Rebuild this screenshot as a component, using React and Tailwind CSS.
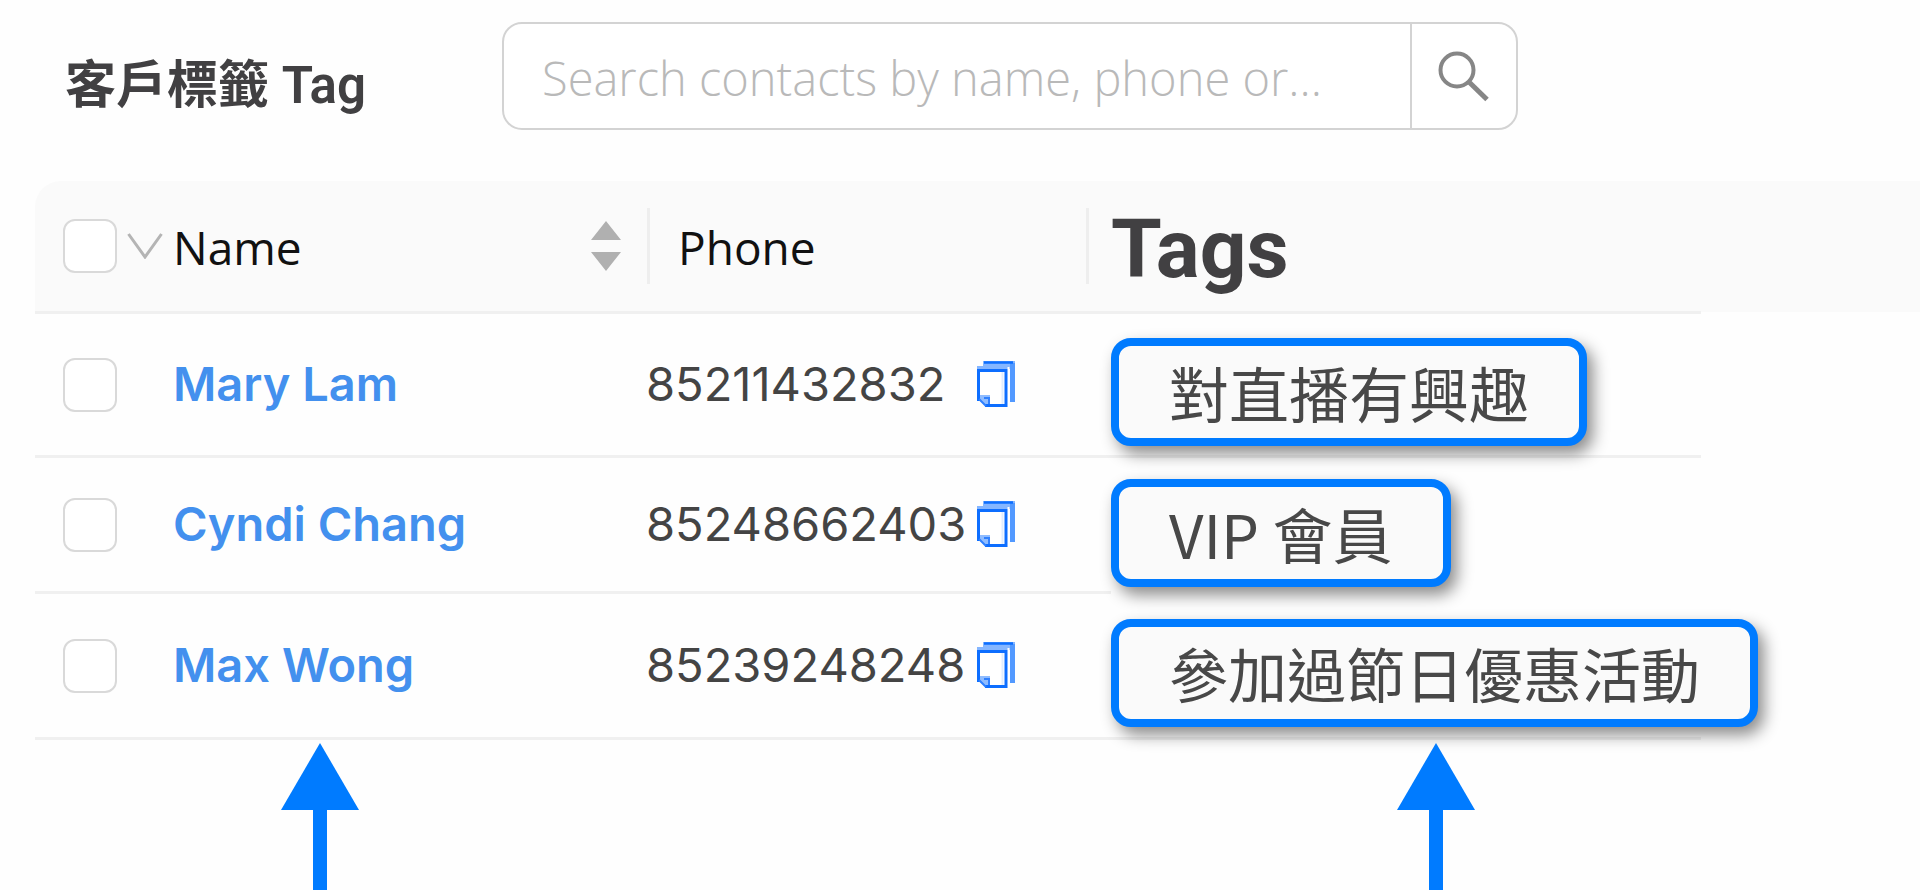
const contacts = [
  {
    id: "mary",
    name: "Mary Lam",
    phone: "85211432832",
    tag: "對直播有興趣",
    tagSize: "text-[60px]",
    height: "h-[144px]",
    tagLine: "border-b-3",
  },
  {
    id: "cyndi",
    name: "Cyndi Chang",
    phone: "85248662403",
    tag: "VIP 會員",
    tagSize: "text-[60px]",
    height: "h-[136px]",
    tagLine: "",
  },
  {
    id: "max",
    name: "Max Wong",
    phone: "85239248248",
    tag: "參加過節日優惠活動",
    tagSize: "text-[59px]",
    height: "h-[146px]",
    tagLine: "border-b-3",
  },
];

function Checkbox({ label }) {
  return (
    <input
      type="checkbox"
      aria-label={label}
      className="block size-[54px] shrink-0 appearance-none rounded-xl border-2 border-[#d9d9d9] bg-white checked:bg-[#007bff]"
    />
  );
}

function SearchIcon() {
  return (
    <svg viewBox="0 0 52 52" className="size-[52px]" fill="none" stroke="#868686" strokeWidth="4">
      <circle cx="19" cy="20" r="16.5" />
      <path d="M30.5 31.5 L49 49.5" strokeWidth="5" />
    </svg>
  );
}

function CopyIcon() {
  return (
    <svg viewBox="0 0 39 47" className="h-[47px] w-[39px]" fill="none">
      <rect x="6" y="0" width="32" height="8" fill="#85b6ff" />
      <rect x="0" y="5" width="30" height="4" fill="#85b6ff" />
      <rect x="33" y="2" width="5" height="39" fill="#5299ff" />
      <path d="M7 1.5 H36" stroke="#0d6eff" strokeWidth="2.5" />
      <path d="M1 8 H30 V46 H8 L1 40 Z" fill="#fff" />
      <path d="M31.5 6 V46" stroke="#fff" strokeWidth="2" />
      <path d="M25.5 11 V43" stroke="#e0edff" strokeWidth="2" />
      <path d="M2 34 H13 V44 H8 L2 39 Z" fill="#8fbcff" />
      <path d="M1.5 40 V9.5 H29 V44.5 H8" stroke="#0d6eff" strokeWidth="3" />
      <path d="M2 38 L9 45 M7 37 H12 V43" stroke="#2f80ff" strokeWidth="2" />
    </svg>
  );
}

function Arrow() {
  return (
    <div className="flex flex-col items-center">
      <svg viewBox="0 0 78 67" className="block h-[67px] w-[78px]">
        <path d="M39 0 L78 67 H0 Z" fill="#007bff" />
      </svg>
      <div className="w-3.5 flex-1 bg-[#007bff]" />
    </div>
  );
}

export default function App() {
  return (
    <div className="flex min-h-screen flex-col overflow-hidden bg-[#fefefe] font-['Inter','Noto_Sans_CJK_TC',sans-serif]">
      <header className="flex items-start pt-[22px] pb-[51px] pl-[65px]">
        <h1 className="w-[437px] pt-7 font-['Roboto','Noto_Sans_CJK_TC',sans-serif] text-[51px] leading-[72px] font-semibold whitespace-nowrap text-[#414042]">
          客戶標籤 Tag
        </h1>
        <form
          role="search"
          onSubmit={(e) => e.preventDefault()}
          className="flex h-[108px] w-full max-w-[1016px] overflow-hidden rounded-[20px] border-2 border-[#d3d3d3] bg-white"
        >
          <input
            type="text"
            aria-label="Search contacts"
            placeholder="Search contacts by name, phone or..."
            className="min-w-0 flex-1 px-[38px] pt-1 font-['Open_Sans',sans-serif] text-[47px] font-light text-[#444] outline-none placeholder:text-[#b9b9b9]"
          />
          <button
            type="submit"
            aria-label="Search"
            className="flex w-[106px] items-center justify-center border-l-2 border-[#d3d3d3]"
          >
            <SearchIcon />
          </button>
        </form>
      </header>

      <main className="pl-[35px]">
        <table className="w-full table-fixed border-separate border-spacing-0">
          <colgroup>
            <col className="w-[138px]" />
            <col className="w-[477px]" />
            <col className="w-[461px]" />
            <col className="w-[590px]" />
            <col />
          </colgroup>
          <thead>
            <tr className="h-[133px] text-left font-['Open_Sans',sans-serif] text-[46px] text-[#111]">
              <th className="rounded-tl-[26px] border-b-3 border-[#f0f0f0] bg-[#fafafa] p-0">
                <div className="flex items-center gap-2.5 pl-7">
                  <Checkbox label="Select all contacts" />
                  <svg viewBox="0 0 36 26" className="h-[26px] w-9 shrink-0" fill="none" stroke="#b4b4b4" strokeWidth="3">
                    <path d="M1.5 1 L18 24 L34.5 1" />
                  </svg>
                </div>
              </th>
              <th className="border-b-3 border-[#f0f0f0] bg-[#fafafa] p-0 font-normal">
                <div className="flex items-center">
                  <span className="flex-1 pt-0.5">Name</span>
                  <button type="button" aria-label="Sort by name" className="mr-[26px]">
                    <svg viewBox="0 0 30 50" className="block h-[50px] w-[30px]" fill="#b0b0b0">
                      <path d="M15 0 L30 19 H0 Z M15 50 L0 31 H30 Z" />
                    </svg>
                  </button>
                  <span className="h-[76px] w-[3px] bg-[#eeeeee]" />
                </div>
              </th>
              <th className="border-b-3 border-[#f0f0f0] bg-[#fafafa] p-0 font-normal">
                <div className="flex items-center pr-[22px] pl-7">
                  <span className="flex-1 pt-0.5">Phone</span>
                  <span className="h-[76px] w-[3px] bg-[#eeeeee]" />
                </div>
              </th>
              <th className="border-b-3 border-[#f0f0f0] bg-[#fafafa] p-0 pt-1.5 font-['Roboto',sans-serif] text-[82px] leading-[96px] font-bold text-[#414042]">
                Tags
              </th>
              <td className="border-b-2 border-[#fefefe] bg-[#fafafa] p-0" />
            </tr>
          </thead>
          <tbody>
            {contacts.map((c) => (
              <tr key={c.id} className={c.height}>
                <td className="border-b-3 border-[#f0f0f0] p-0 pl-7">
                  <Checkbox label={`Select ${c.name}`} />
                </td>
                <td className="border-b-3 border-[#f0f0f0] p-0 text-[47px] font-semibold text-[#4390ee]">
                  <a href={`#${c.id}`}>{c.name}</a>
                </td>
                <td className="border-b-3 border-[#f0f0f0] p-0">
                  <div className="flex items-center">
                    <span className="-ml-1 w-[331px] text-[47px] text-[#444444]">{c.phone}</span>
                    <button type="button" aria-label={`Copy ${c.phone}`}>
                      <CopyIcon />
                    </button>
                  </div>
                </td>
                <td className={`border-[#f0f0f0] p-0 pt-3.5 ${c.tagLine}`}>
                  <span
                    className={`inline-flex h-[108px] items-center rounded-[20px] border-8 border-[#007bff] bg-[#fafafa] px-[50px] align-middle font-['Noto_Sans_CJK_TC',sans-serif] leading-[88px] whitespace-nowrap text-[#484848] shadow-[6px_8px_16px_rgba(0,0,0,0.45)] ${c.tagSize}`}
                  >
                    {c.tag}
                  </span>
                </td>
                <td className="p-0" />
              </tr>
            ))}
          </tbody>
        </table>
      </main>

      <div className="flex flex-1 gap-[1038px] pt-[3px] pl-[281px]" aria-hidden="true">
        <Arrow />
        <Arrow />
      </div>
    </div>
  );
}
